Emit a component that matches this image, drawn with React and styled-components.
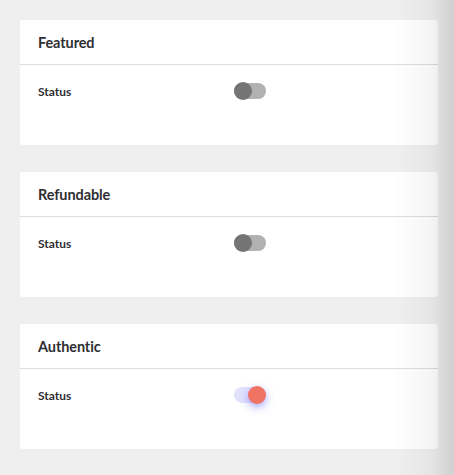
import React, { useState } from "react";
import styled, { createGlobalStyle } from "styled-components";

const Global = createGlobalStyle`
  html, body { margin: 0; padding: 0; background: #efefef; }
  body { font-family: Lato, "Open Sans", sans-serif; }
`;

const Page = styled.div`
  position: relative;
  width: 454px;
  height: 475px;
  overflow: hidden;
  background: #efefef;
  box-sizing: border-box;
  padding: 20px 16px 0 20px;
  display: flex;
  flex-direction: column;
  gap: 27px;
`;

const EdgeShade = styled.div`
  position: absolute;
  top: 0;
  right: 0;
  width: 60px;
  height: 100%;
  pointer-events: none;
  background: linear-gradient(to right, rgba(0,0,0,0) 0%, rgba(0,0,0,0.04) 60%, rgba(0,0,0,0.13) 100%);
`;

const Card = styled.section`
  width: 418px;
  height: 125px;
  background: #fff;
  border-radius: 3px;
  display: flex;
  flex-direction: column;
`;

const CardHeader = styled.header`
  height: 45px;
  box-sizing: border-box;
  display: flex;
  align-items: center;
  padding: 0 18px;
  border-bottom: 1px solid #dcdde3;
`;

const Title = styled.h3`
  margin: 0;
  font-size: 14.5px;
  font-weight: 700;
  color: #2f2f33;
  letter-spacing: -0.1px;
`;

const Body = styled.div`
  padding: 17px 18px 0 18px;
`;

const Row = styled.div`
  display: grid;
  grid-template-columns: 196px auto;
  align-items: center;
  height: 18px;
`;

const Label = styled.span`
  font-size: 12px;
  font-weight: 700;
  color: #2f2f33;
`;

const Track = styled.button`
  position: relative;
  width: 32px;
  height: 16px;
  padding: 0;
  border: none;
  border-radius: 8px;
  cursor: pointer;
  background: ${p => (p.$on ? "#e3e2fb" : "#b1b1b1")};
`;

const Knob = styled.span`
  position: absolute;
  top: -1px;
  left: ${p => (p.$on ? "14px" : "0px")};
  width: 18px;
  height: 18px;
  border-radius: 50%;
  background: ${p => (p.$on ? "#f07262" : "#747474")};
  box-shadow: ${p => (p.$on ? "0 3px 8px rgba(90, 90, 255, 0.55)" : "none")};
`;

function Toggle({ on, onClick }) {
  return (
    <Track $on={on} onClick={onClick} aria-pressed={on}>
      <Knob $on={on} />
    </Track>
  );
}

const initial = [
  { title: "Featured", on: false },
  { title: "Refundable", on: false },
  { title: "Authentic", on: true },
];

export default function App() {
  const [items, setItems] = useState(initial);
  return (
    <>
      <Global />
      <Page>
        {items.map((it, i) => (
          <Card key={it.title}>
            <CardHeader>
              <Title>{it.title}</Title>
            </CardHeader>
            <Body>
              <Row>
                <Label>Status</Label>
                <Toggle
                  on={it.on}
                  onClick={() =>
                    setItems(items.map((x, j) => (j === i ? { ...x, on: !x.on } : x)))
                  }
                />
              </Row>
            </Body>
          </Card>
        ))}
        <EdgeShade />
      </Page>
    </>
  );
}
